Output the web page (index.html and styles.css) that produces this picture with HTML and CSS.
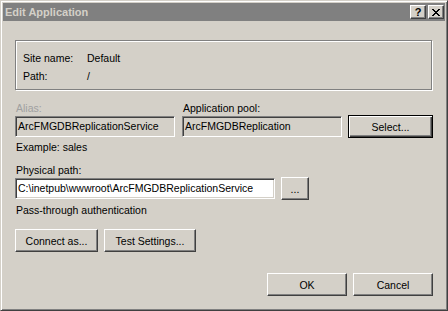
FILE: index.html
```html
<!DOCTYPE html>
<html lang="en">
<head>
<meta charset="UTF-8">
<title>Edit Application</title>
<link rel="stylesheet" href="styles.css">
</head>
<body>
<div class="window">
    <div class="titlebar">
        <span class="caption">Edit Application</span>
        <div class="caption-btns">
            <span class="cbtn">?</span>
            <span class="cbtn">
                <svg width="8" height="7" viewBox="0 0 8 7" shape-rendering="crispEdges"><path fill="#000" d="M0 0h2v1h-2z M6 0h2v1h-2z M1 1h2v1h-2z M5 1h2v1h-2z M2 2h4v1h-4z M3 3h2v1h-2z M2 4h4v1h-4z M1 5h2v1h-2z M5 5h2v1h-2z M0 6h2v1h-2z M6 6h2v1h-2z"/></svg>
            </span>
        </div>
    </div>

    <div class="content">
        <div class="group">
            <span>Site name:</span><span>Default</span>
            <span>Path:</span><span>/</span>
        </div>

        <div class="fields">
            <div class="label disabled">Alias:</div>
            <div class="label">Application pool:</div>
            <div></div>
            <div class="field ro">ArcFMGDBReplicationService</div>
            <div class="field ro pool">ArcFMGDBReplication</div>
            <button class="btn default select">Select...</button>
        </div>

        <div class="label hint">Example: sales</div>
        <div class="label phys">Physical path:</div>
        <div class="row path-row">
            <div class="field path">C:\inetpub\wwwroot\ArcFMGDBReplicationService</div>
            <button class="btn dots">...</button>
        </div>

        <div class="label auth">Pass-through authentication</div>
        <div class="row actions">
            <button class="btn connect">Connect as...</button>
            <button class="btn test">Test Settings...</button>
        </div>

        <div class="row footer">
            <button class="btn wide">OK</button>
            <button class="btn wide">Cancel</button>
        </div>
    </div>
</div>
</body>
</html>
```

FILE: styles.css
```css
* { box-sizing:border-box; }
body {
    margin:0; background:#d4d0c8; color:#000;
    font-family:"Liberation Sans", Arial, sans-serif; font-size:10.5px;
}
.window {
    width:448px; height:311px; padding:2px;
    border:1px solid; border-color:#d4d0c8 #404040 #404040 #d4d0c8;
    box-shadow:inset 1px 1px #fff, inset -1px -1px #808080;
}
.titlebar {
    height:18px; background:#808080;
    display:flex; align-items:center; padding:0 1px 0 2px;
}
.caption { color:#d4d0c8; font-weight:bold; font-size:11px; }
.caption-btns { margin-left:auto; display:flex; gap:2px; }
.cbtn {
    width:16px; height:14px; background:#d4d0c8;
    border:1px solid; border-color:#fff #404040 #404040 #fff;
    box-shadow:inset -1px -1px #808080;
    display:flex; align-items:center; justify-content:center;
    font-weight:bold; font-size:11px; line-height:12px;
}
.content { padding:19px 12px 0 12px; }

.group {
    width:417px; height:50px;
    border:1px solid #808080;
    box-shadow:1px 1px 0 #fff, inset 1px 1px 0 #fff;
    display:grid; grid-template-columns:64px auto;
    padding:8px 0 4px 7px; line-height:18px;
}

.label { line-height:14px; padding-left:1px; white-space:nowrap; }
.label.disabled { color:#a0a0a0; }
.fields {
    margin-top:11px;
    display:grid; grid-template-columns:167px 166px 85px;
    grid-template-rows:14px 23px; align-items:center;
}
.field {
    height:21px; background:#fff;
    border:1px solid; border-color:#808080 #fff #fff #808080;
    box-shadow:inset 1px 1px #404040, inset -1px -1px #d4d0c8;
    padding:0 2px; line-height:19px; white-space:nowrap; overflow:hidden;
}
.field.ro { background:#d4d0c8; width:160px; }

.btn {
    height:23px; padding:0; background:#d4d0c8; color:#000;
    font:inherit; cursor:pointer;
    border:1px solid; border-color:#fff #404040 #404040 #fff;
    box-shadow:inset -1px -1px #808080;
}
.btn.default {
    border-color:#000;
    box-shadow:inset 1px 1px #fff, inset -1px -1px #404040, inset -2px -2px #808080;
}
.select { width:85px; }

.hint { margin-top:2px; }
.phys { margin-top:9px; }
.row { display:flex; align-items:center; gap:6px; height:23px; }
.field.path { width:260px; }
.dots { width:28px; }
.auth { margin-top:3px; }
.actions { margin-top:12px; }
.connect { width:83px; }
.test { width:92px; }
.footer { margin-top:21px; justify-content:flex-end; }
.wide { width:80px; }
```
